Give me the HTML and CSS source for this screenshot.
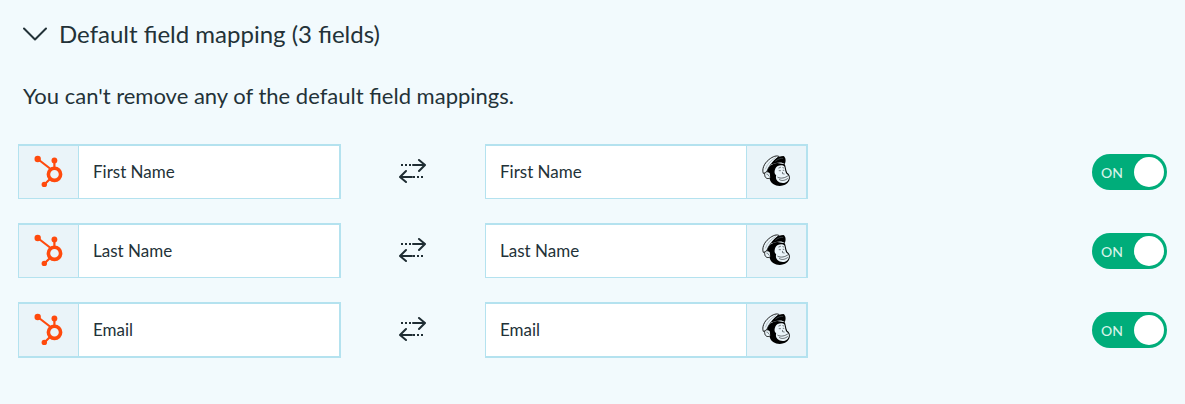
FILE: index.html
```html
<!DOCTYPE html>
<html lang="en">
<head>
<meta charset="utf-8">
<title>Default field mapping</title>
<link rel="stylesheet" href="styles.css">
</head>
<body>
<svg class="sprite" aria-hidden="true">
  <symbol id="hubspot" viewBox="0 0 59 52">
    <g fill="none" stroke="#ff4a0d">
      <circle cx="35.5" cy="28.3" r="6.1" stroke-width="3.6"/>
      <path d="M18.7 13 31 22.5M35.4 14.3V22M25.3 38.5 31 33" stroke-width="2.2"/>
    </g>
    <g fill="#ff4a0d">
      <circle cx="18.7" cy="13" r="3.2"/>
      <circle cx="35.4" cy="14.4" r="2.9"/>
      <circle cx="25.3" cy="38.4" r="2.7"/>
    </g>
  </symbol>
  <symbol id="mailchimp" viewBox="0 0 59 52">
    <g transform="translate(7.5 3) scale(.3333)" stroke-linecap="round" stroke-linejoin="round">
      <path d="M38 66C42 52 54 43 68 42L91 46C94 54 94 62 98 71C107 77 108 88 103 97C95 112 70 115 56 105C49 100 46 94 45 86Z" fill="#000"/>
      <path d="M63 58C67 48 85 46 90 53C92 60 92 68 96 74C105 79 105 88 100 95C92 105 76 103 69 96C63 90 64 84 65 79C58 74 60 65 63 58Z" fill="#eaf4f9"/>
      <path d="M26 72C22 61 28 44 43 32C55 22 68 18 74 23C65 29 53 39 45 52C40 59 38 67 35 71Z" fill="#eaf4f9" stroke="#000" stroke-width="2.6"/>
      <path d="M33 60C38 45 50 33 63 26" fill="none" stroke="#7d878b" stroke-width="1.4"/>
      <path d="M51 46C57 34 68 21 87 21C94 25 95 36 91 45C82 37 67 40 51 46Z" fill="#000"/>
      <path d="M63 36C69 31 78 27 85 28" fill="none" stroke="#68747a" stroke-width="1.5"/>
      <path d="M46 71C35 64 28 71 31 80C32 88 41 92 48 86Z" fill="#eaf4f9" stroke="#000" stroke-width="2.6"/>
      <path d="M37 75C42 74 40 81 44 82" fill="none" stroke="#3a4145" stroke-width="2"/>
      <path d="M73 57 78 55M85 56 88 57M74 65H78M86 64H88M84 70 84 74 89 75" fill="none" stroke="#3a4145" stroke-width="2"/>
      <path d="M70 85C79 90 92 87 101 80M75 92C83 97 92 94 99 89" fill="none" stroke="#202427" stroke-width="2"/>
    </g>
  </symbol>
  <symbol id="swap" viewBox="0 0 28 24">
    <g fill="none" stroke="#1f2d33" stroke-width="2" stroke-linecap="round" stroke-linejoin="round">
      <path d="M14 6H25M20 1 26 6 20 12M1.5 18H13M7 12 1 18 7 23"/>
    </g>
    <path d="M2 6H14M14 18H26" fill="none" stroke="#1f2d33" stroke-width="2" stroke-dasharray="2 2"/>
  </symbol>
</svg>
<main class="mapping">
  <h2 class="mapping-title">
    <button class="mapping-toggle" type="button" aria-expanded="true">
      <svg class="chevron" viewBox="0 0 24 14" aria-hidden="true"><path d="M1 1.5 12 12.5 23 1.5"/></svg>
      Default field mapping (3 fields)
    </button>
  </h2>
  <p class="mapping-note">You can't remove any of the default field mappings.</p>
  <div class="mapping-rows">
    <div class="row">
      <div class="field">
        <svg class="brand" role="img" aria-label="HubSpot"><use href="#hubspot"/></svg>
        <input class="field-name" type="text" value="First Name" aria-label="HubSpot field 1" readonly>
      </div>
      <svg class="swap" aria-hidden="true"><use href="#swap"/></svg>
      <div class="field">
        <input class="field-name" type="text" value="First Name" aria-label="Mailchimp field 1" readonly>
        <svg class="brand brand-end" role="img" aria-label="Mailchimp"><use href="#mailchimp"/></svg>
      </div>
      <label class="switch"><input class="switch-input" type="checkbox" role="switch" aria-label="Sync First Name" checked><span class="switch-text">ON</span><span class="switch-knob"></span></label>
    </div>
    <div class="row">
      <div class="field">
        <svg class="brand" role="img" aria-label="HubSpot"><use href="#hubspot"/></svg>
        <input class="field-name" type="text" value="Last Name" aria-label="HubSpot field 2" readonly>
      </div>
      <svg class="swap" aria-hidden="true"><use href="#swap"/></svg>
      <div class="field">
        <input class="field-name" type="text" value="Last Name" aria-label="Mailchimp field 2" readonly>
        <svg class="brand brand-end" role="img" aria-label="Mailchimp"><use href="#mailchimp"/></svg>
      </div>
      <label class="switch"><input class="switch-input" type="checkbox" role="switch" aria-label="Sync Last Name" checked><span class="switch-text">ON</span><span class="switch-knob"></span></label>
    </div>
    <div class="row">
      <div class="field">
        <svg class="brand" role="img" aria-label="HubSpot"><use href="#hubspot"/></svg>
        <input class="field-name" type="text" value="Email" aria-label="HubSpot field 3" readonly>
      </div>
      <svg class="swap" aria-hidden="true"><use href="#swap"/></svg>
      <div class="field">
        <input class="field-name" type="text" value="Email" aria-label="Mailchimp field 3" readonly>
        <svg class="brand brand-end" role="img" aria-label="Mailchimp"><use href="#mailchimp"/></svg>
      </div>
      <label class="switch"><input class="switch-input" type="checkbox" role="switch" aria-label="Sync Email" checked><span class="switch-text">ON</span><span class="switch-knob"></span></label>
    </div>
  </div>
</main>
</body>
</html>
```
FILE: styles.css
```css
* { box-sizing: border-box; }

body {
  margin: 0;
  background: #f2fafd;
  color: #233238;
  font-family: Lato, "Liberation Sans", sans-serif;
}

.sprite { display: none; }

.mapping { padding: 18px; }

.mapping-title { margin: 0; }

.mapping-toggle {
  display: flex;
  align-items: center;
  gap: 12px;
  padding: 0 5px;
  border: 0;
  background: none;
  color: inherit;
  font: 400 24px/32px Lato, "Liberation Sans", sans-serif;
  cursor: pointer;
}

.chevron {
  width: 24px;
  height: 14px;
  fill: none;
  stroke: currentColor;
  stroke-width: 2;
  stroke-linecap: round;
  stroke-linejoin: round;
}

.mapping-note {
  margin: 32px 5px 34px;
  font-size: 22px;
  line-height: 28px;
}

.mapping-rows {
  display: grid;
  gap: 24px;
}

.row {
  display: grid;
  grid-template-columns: minmax(180px, 323px) 144px minmax(180px, 323px) 1fr;
  align-items: center;
}

.field {
  display: flex;
  height: 55px;
  border: solid #b4e2ef;
  border-width: 2px 2px 1px 1px;
  background: #fff;
}

.row:last-child .field {
  height: 56px;
  border-bottom-width: 2px;
}

.brand {
  flex: none;
  width: 60px;
  height: 52px;
  background: #eaf4f9;
  border-right: 1px solid #b4e2ef;
}

.brand-end {
  border-right: 0;
  border-left: 1px solid #b4e2ef;
}

.field-name {
  flex: 1;
  min-width: 0;
  padding: 0 14px;
  border: 0;
  background: none;
  color: inherit;
  font: 400 17px/24px Lato, "Liberation Sans", sans-serif;
}

.swap {
  width: 28px;
  height: 24px;
  margin-bottom: 2px;
  justify-self: center;
}

.switch {
  display: flex;
  align-items: center;
  justify-content: space-between;
  justify-self: end;
  width: 75px;
  height: 36px;
  padding: 3px 3px 3px 9px;
  border-radius: 18px;
  background: #00ad7a;
  cursor: pointer;
}

.switch-input {
  position: absolute;
  opacity: 0;
}

.switch-text {
  padding-top: 2px;
  color: #d5f3e9;
  font-size: 14px;
  font-weight: 500;
  line-height: 20px;
}

.switch-knob {
  width: 30px;
  height: 30px;
  border-radius: 50%;
  background: #fff;
}
```
